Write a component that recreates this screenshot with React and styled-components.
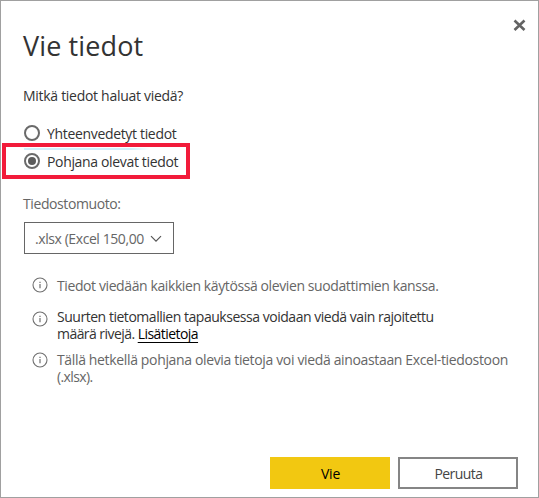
import React from "react";
import styled, { createGlobalStyle } from "styled-components";

const GlobalStyle = createGlobalStyle`
  * { box-sizing: border-box; }
  body { margin: 0; background: #fff; }
`;

const Dialog = styled.main`
  width: 539px;
  height: 498px;
  border: 1px solid #a0a0a0;
  background: #fff;
  color: #333;
  font: 14px/20px "Open Sans", "Noto Sans", sans-serif;
  display: flex;
  flex-direction: column;
  overflow: hidden;
`;

const Header = styled.header`
  display: flex;
  justify-content: space-between;
  height: 85px;
  padding: 17px 12px 0 22px;
`;

const Title = styled.h1`
  margin: 9px 0 0;
  font-size: 27px;
  font-weight: 400;
  line-height: 38px;
  white-space: nowrap;
`;

const CloseButton = styled.button`
  width: 13px;
  height: 13px;
  padding: 0;
  border: 0;
  background: none;
  color: #636363;
  display: flex;
`;

const Line = styled.span`
  display: block;
  width: max-content;
  white-space: nowrap;
  letter-spacing: ${(p) => p.$spacing || 0}px;
`;

const Question = styled.div`
  height: 37px;
  padding-left: 22px;
`;

const Option = styled.label`
  display: flex;
  align-items: center;
  gap: 7px;
  height: 20px;
  margin-left: 23px;
  ${Line} { padding-top: 1px; }
`;

const Radio = styled.span`
  flex: none;
  width: 16px;
  height: 16px;
  border: 2px solid #6a6a6a;
  border-radius: 50%;
  display: grid;
  place-items: center;
  &::after {
    content: "";
    width: 8px;
    height: 8px;
    border-radius: 50%;
    background: ${(p) => (p.$checked ? "#5c5c5c" : "transparent")};
  }
`;

const Highlight = styled.div`
  width: 188px;
  height: 36px;
  margin: 0 0 0 1px;
  border: 4px solid #f21b3a;
  display: flex;
  flex-direction: column;
  ${Option} { margin: 1px 0 0 18px; }
`;

const FocusLine = styled.span`
  width: 126px;
  height: 2px;
  margin: 1px 0 0 18px;
  background: linear-gradient(90deg, #d0effb 85%, #fff);
`;

const FormatLabel = styled.div`
  margin-top: 15px;
  padding-left: 22px;
  color: #666;
`;

const Select = styled.button`
  width: 150px;
  height: 32px;
  margin: 8px 0 0 23px;
  padding: 1px 11px 0 10px;
  border: 1px solid #666;
  background: #fff;
  color: #666;
  font: inherit;
  display: flex;
  align-items: center;
  justify-content: space-between;
  svg { flex: none; }
`;

const Notes = styled.ul`
  list-style: none;
  margin: 23px 0 0 31px;
  padding: 0;
`;

const Note = styled.li`
  display: flex;
  gap: 9px;
  height: ${(p) => p.$height}px;
  line-height: 17px;
  color: ${(p) => (p.$dark ? "#333" : "#666")};
  svg { flex: none; margin-top: ${(p) => p.$iconTop || 0}px; }
`;

const NoteLink = styled.a`
  color: #000;
  text-decoration: underline;
  text-decoration-thickness: 1px;
  text-underline-offset: 3px;
  text-decoration-skip-ink: none;
`;

const Footer = styled.footer`
  display: flex;
  justify-content: flex-end;
  gap: 8px;
  margin: auto 20px 8px 0;
`;

const Button = styled.button`
  width: 120px;
  height: 32px;
  padding: 2px 0 0 1px;
  font: inherit;
  display: flex;
  align-items: center;
  justify-content: center;
  border: ${(p) => (p.$primary ? "0" : "2px solid #858585")};
  background: ${(p) => (p.$primary ? "#f2c811" : "#fff")};
  color: ${(p) => (p.$primary ? "#000" : "#444")};
`;

const InfoIcon = () => (
  <svg width="16" height="16" viewBox="0 0 16 16" fill="none">
    <circle cx="8" cy="8" r="7" stroke="#707070" strokeWidth="1.1" />
    <path d="M8 7v4.3M8 4.7v1.2" stroke="#707070" strokeWidth="1.2" />
  </svg>
);

export default function App() {
  return (
    <>
      <GlobalStyle />
      <Dialog>
        <Header>
          <Title><Line $spacing={0.12}>Vie tiedot</Line></Title>
          <CloseButton aria-label="Sulje">
            <svg width="13" height="13" viewBox="0 0 13 13">
              <path d="M1.5 2.5l10 9.5M11.5 2.5l-10 9.5" stroke="currentColor" strokeWidth="2.6" />
            </svg>
          </CloseButton>
        </Header>
        <Question><Line $spacing={-0.29}>Mitkä tiedot haluat viedä?</Line></Question>
        <Option><Radio /><Line $spacing={-0.33}>Yhteenvedetyt tiedot</Line></Option>
        <Highlight>
          <FocusLine />
          <Option><Radio $checked /><Line $spacing={-0.34}>Pohjana olevat tiedot</Line></Option>
        </Highlight>
        <FormatLabel><Line $spacing={-0.4}>Tiedostomuoto:</Line></FormatLabel>
        <Select>
          <Line $spacing={-0.42}>.xlsx (Excel 150,00</Line>
          <svg width="12" height="8" viewBox="0 0 12 8" fill="none">
            <path d="M1 1.2l5 5 5-5" stroke="#555" strokeWidth="1.2" />
          </svg>
        </Select>
        <Notes>
          <Note $height={31}>
            <InfoIcon />
            <Line $spacing={-0.4}>Tiedot viedään kaikkien käytössä olevien suodattimien kanssa.</Line>
          </Note>
          <Note $height={43} $dark $iconTop={3}>
            <InfoIcon />
            <div>
              <Line $spacing={-0.47}>Suurten tietomallien tapauksessa voidaan viedä vain rajoitettu</Line>
              <Line $spacing={-0.55}>määrä rivejä. <NoteLink>Lisätietoja</NoteLink></Line>
            </div>
          </Note>
          <Note $height={34} $iconTop={1}>
            <InfoIcon />
            <div>
              <Line $spacing={-0.35}>Tällä hetkellä pohjana olevia tietoja voi viedä ainoastaan Excel-tiedostoon</Line>
              <Line $spacing={-0.6}>(.xlsx).</Line>
            </div>
          </Note>
        </Notes>
        <Footer>
          <Button $primary><Line $spacing={-0.2}>Vie</Line></Button>
          <Button><Line $spacing={-0.55}>Peruuta</Line></Button>
        </Footer>
      </Dialog>
    </>
  );
}
